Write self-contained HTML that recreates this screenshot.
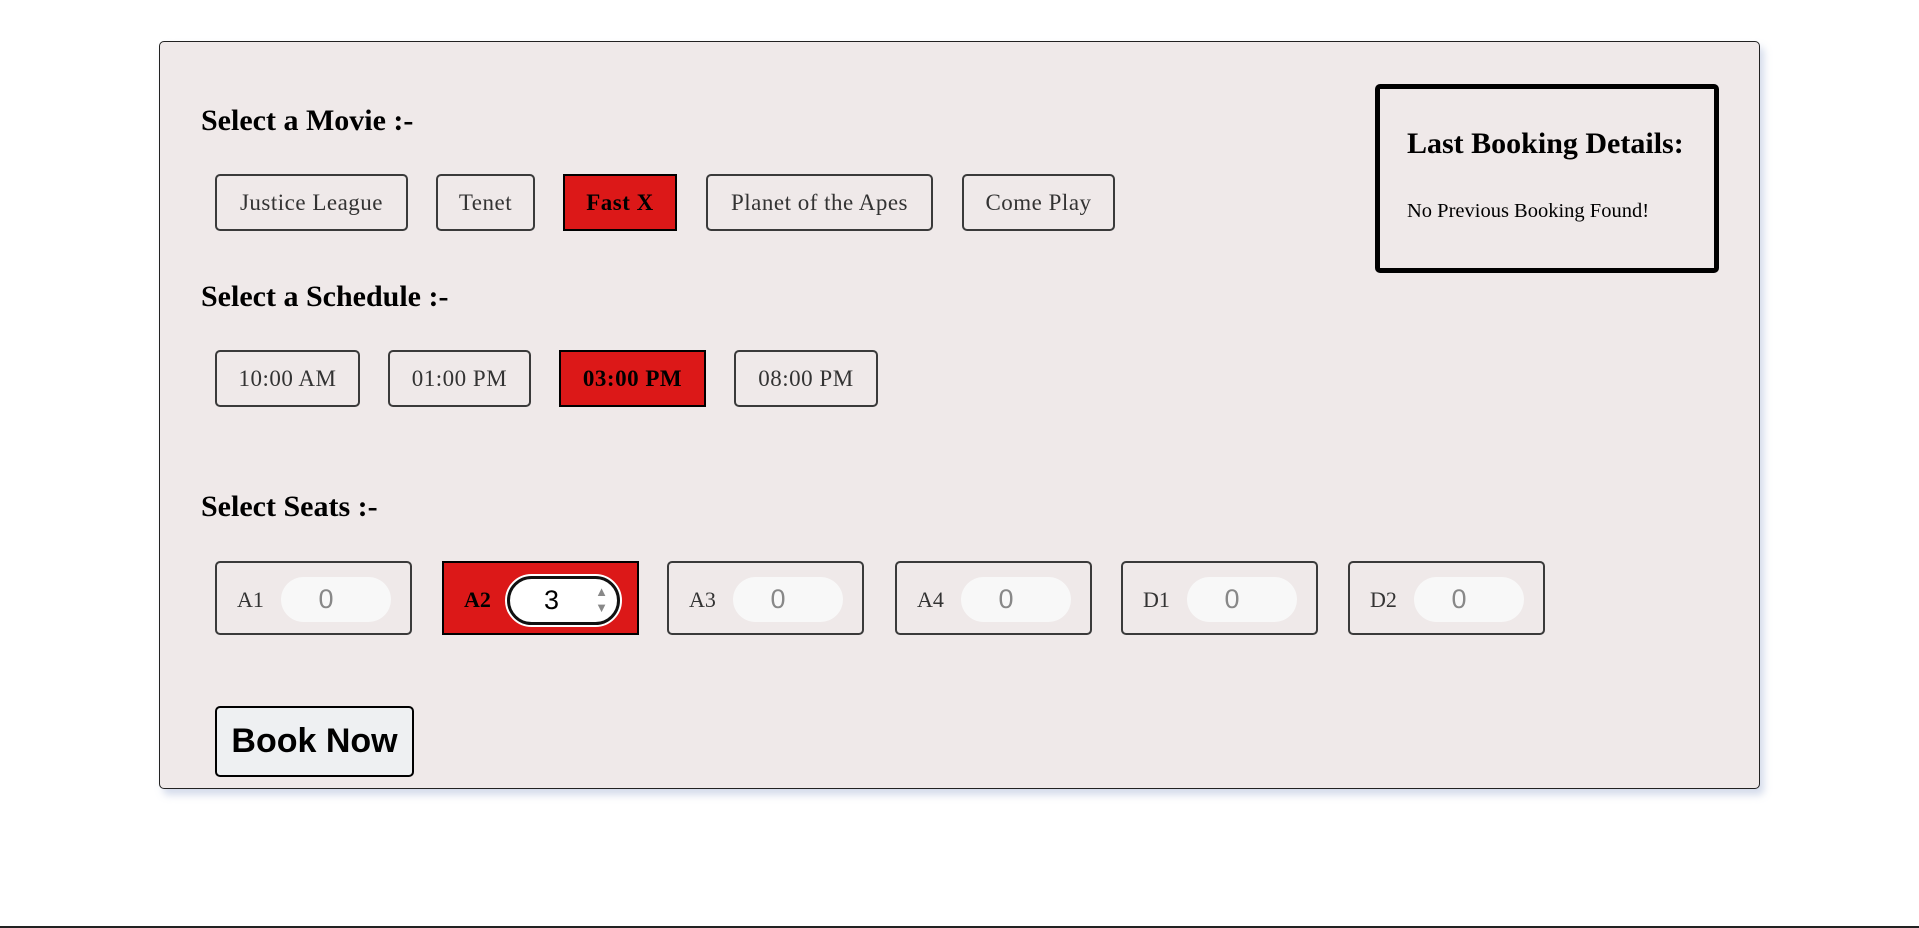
<!DOCTYPE html>
<html><head><meta charset="utf-8"><style>
*{box-sizing:border-box;margin:0;padding:0}
html,body{width:1919px;height:928px;background:#fff;overflow:hidden;position:relative;font-family:"Liberation Serif",serif}
.card{position:absolute;left:159px;top:41px;width:1601px;height:748px;background:#efe9e9;border:1px solid #222;border-radius:5px;box-shadow:4px 6px 8px rgba(160,175,210,.45)}
.h{position:absolute;left:201px;font-weight:bold;font-size:30px;color:#000;line-height:34px}
.b{position:absolute;height:57px;border:2px solid #3a3a3a;border-radius:5px;display:flex;align-items:center;justify-content:center;font-size:23px;color:#333;letter-spacing:.5px;white-space:nowrap}
.sel{background:#dc1818;border-color:#000;border-radius:0;font-weight:bold;color:#000}
.seat{position:absolute;top:561px;width:197px;height:74px;border:2px solid #3a3a3a;border-radius:5px;font-size:22px;color:#333}
.seat .l{position:absolute;left:20px;top:24px}
.seat .i{position:absolute;left:64px;top:14px;width:110px;height:45px;border-radius:23px;background:#f8f8f8;color:#888;font-family:"Liberation Sans",sans-serif;font-size:27px;text-align:center;line-height:45px;padding-right:20px}
</style></head><body>
<div class="card"></div>
<div class="h" style="top:104px">Select a Movie :-</div>
<div class="b" style="left:215px;top:174px;width:193px">Justice League</div>
<div class="b" style="left:436px;top:174px;width:99px">Tenet</div>
<div class="b sel" style="left:563px;top:174px;width:114px">Fast X</div>
<div class="b" style="left:706px;top:174px;width:227px">Planet of the Apes</div>
<div class="b" style="left:962px;top:174px;width:153px">Come Play</div>
<div class="h" style="top:280px">Select a Schedule :-</div>
<div class="b" style="left:215px;top:350px;width:145px">10:00 AM</div>
<div class="b" style="left:388px;top:350px;width:143px">01:00 PM</div>
<div class="b sel" style="left:559px;top:350px;width:147px">03:00 PM</div>
<div class="b" style="left:734px;top:350px;width:144px">08:00 PM</div>
<div class="h" style="top:490px">Select Seats :-</div>
<div class="seat" style="left:215px"><span class="l">A1</span><span class="i">0</span></div>
<div class="seat" style="left:442px;background:#dc1818;border-color:#000;border-radius:0;color:#000;font-weight:bold"><span class="l">A2</span>
<span style="position:absolute;left:61px;top:11px;width:117px;height:53px;border-radius:27px;background:#fff;border:2px solid #fff"><span style="position:absolute;inset:0;border:3px solid #111;border-radius:25px;font-family:'Liberation Sans',sans-serif;font-weight:normal;font-size:27px;line-height:43px;text-align:center;color:#000;padding-right:24px">3</span><span style="position:absolute;right:12px;top:8px;font-size:13px;color:#888;line-height:16px;font-weight:normal">▲<br>▼</span></span></div>
<div class="seat" style="left:667px"><span class="l">A3</span><span class="i">0</span></div>
<div class="seat" style="left:895px"><span class="l">A4</span><span class="i">0</span></div>
<div class="seat" style="left:1121px"><span class="l">D1</span><span class="i">0</span></div>
<div class="seat" style="left:1348px"><span class="l">D2</span><span class="i">0</span></div>
<div style="position:absolute;left:215px;top:706px;width:199px;height:71px;background:#eef0f2;border:2px solid #000;border-radius:5px;font-family:'Liberation Sans',sans-serif;font-weight:bold;font-size:34px;line-height:67px;text-align:center;color:#000;white-space:nowrap">Book Now</div>
<div style="position:absolute;left:1375px;top:84px;width:344px;height:189px;border:5px solid #000;border-radius:5px">
<div style="position:absolute;left:27px;top:38px;font-weight:bold;font-size:30px;white-space:nowrap">Last Booking Details:</div>
<div style="position:absolute;left:27px;top:111px;font-size:20.5px;white-space:nowrap">No Previous Booking Found!</div>
</div>
<div style="position:absolute;left:0;top:926px;width:1919px;height:2px;background:#222"></div>
</body></html>
